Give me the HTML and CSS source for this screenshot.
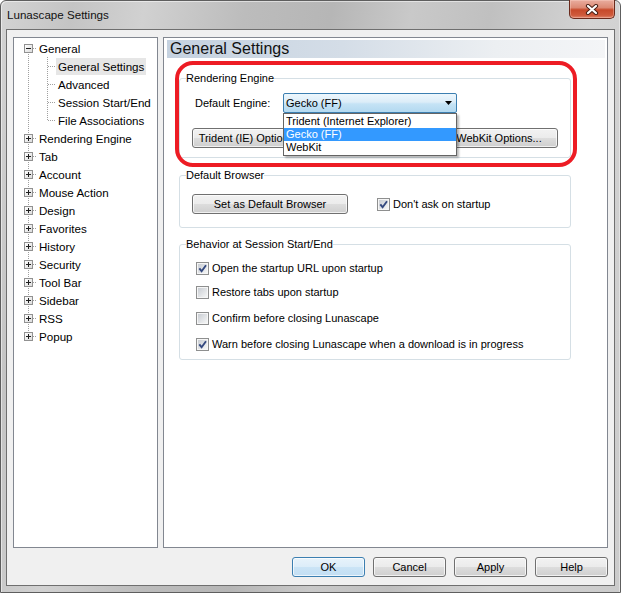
FILE: index.html
```html
<!DOCTYPE html>
<html lang="en">
<head>
    <meta charset="UTF-8">
    <title>Lunascape Settings</title>
    <link rel="stylesheet" href="styles.css">
</head>
<body>
<div class="window">
    <div class="titlebar">
        <span class="caption">Lunascape Settings</span>
        <button class="close" title="Close">
            <svg width="14" height="11" viewBox="0 0 14 11">
                <path d="M3 2 L11 9 M11 2 L3 9" stroke="#4a2016" stroke-width="4.2" stroke-linecap="round"/>
                <path d="M3 2 L11 9 M11 2 L3 9" stroke="#fff" stroke-width="2.2" stroke-linecap="round"/>
            </svg>
        </button>
    </div>

    <div class="client">
        <div class="main">
            <div class="tree-panel">
                <ul class="tree">
                    <li>
                        <div class="row"><span class="exp minus"></span><span class="dots"></span><span class="label">General</span></div>
                        <ul class="sub">
                            <li class="row"><span class="dots long"></span><span class="label selected">General Settings</span></li>
                            <li class="row"><span class="dots long"></span><span class="label">Advanced</span></li>
                            <li class="row"><span class="dots long"></span><span class="label">Session Start/End</span></li>
                            <li class="row"><span class="dots long"></span><span class="label">File Associations</span></li>
                        </ul>
                    </li>
                    <li class="row"><span class="exp"></span><span class="dots"></span><span class="label">Rendering Engine</span></li>
                    <li class="row"><span class="exp"></span><span class="dots"></span><span class="label">Tab</span></li>
                    <li class="row"><span class="exp"></span><span class="dots"></span><span class="label">Account</span></li>
                    <li class="row"><span class="exp"></span><span class="dots"></span><span class="label">Mouse Action</span></li>
                    <li class="row"><span class="exp"></span><span class="dots"></span><span class="label">Design</span></li>
                    <li class="row"><span class="exp"></span><span class="dots"></span><span class="label">Favorites</span></li>
                    <li class="row"><span class="exp"></span><span class="dots"></span><span class="label">History</span></li>
                    <li class="row"><span class="exp"></span><span class="dots"></span><span class="label">Security</span></li>
                    <li class="row"><span class="exp"></span><span class="dots"></span><span class="label">Tool Bar</span></li>
                    <li class="row"><span class="exp"></span><span class="dots"></span><span class="label">Sidebar</span></li>
                    <li class="row"><span class="exp"></span><span class="dots"></span><span class="label">RSS</span></li>
                    <li class="row"><span class="exp"></span><span class="dots"></span><span class="label">Popup</span></li>
                </ul>
            </div>

            <div class="page">
                <div class="page-title">General Settings</div>
                <div class="groups">
                    <fieldset class="group engine-group">
                        <legend>Rendering Engine</legend>
                        <div class="field-row">
                            <span class="field-label">Default Engine:</span>
                            <div class="combo">
                                <div class="combo-box">
                                    <span>Gecko (FF)</span>
                                    <svg width="7" height="4" viewBox="0 0 7 4"><path d="M0 0 H7 L3.5 4 Z" fill="#000"/></svg>
                                </div>
                                <ul class="combo-list">
                                    <li>Trident (Internet Explorer)</li>
                                    <li class="selected">Gecko (FF)</li>
                                    <li>WebKit</li>
                                </ul>
                            </div>
                        </div>
                        <div class="button-row">
                            <button class="btn engine-btn">Trident (IE) Options...</button>
                            <button class="btn engine-btn">Gecko (FF) Options...</button>
                            <button class="btn engine-btn">WebKit Options...</button>
                        </div>
                    </fieldset>

                    <fieldset class="group browser-group">
                        <legend>Default Browser</legend>
                        <div class="browser-row">
                            <button class="btn default-btn">Set as Default Browser</button>
                            <label class="check ask">
                                <span class="cb"><svg width="9" height="9" viewBox="0 0 9 9"><path d="M1.3 4.3 L3.6 7.2 L8 1.2" stroke="#34497f" stroke-width="1.9" fill="none"/></svg></span>
                                Don't ask on startup
                            </label>
                        </div>
                    </fieldset>

                    <fieldset class="group session-group">
                        <legend>Behavior at Session Start/End</legend>
                        <label class="check check-row">
                            <span class="cb"><svg width="9" height="9" viewBox="0 0 9 9"><path d="M1.3 4.3 L3.6 7.2 L8 1.2" stroke="#34497f" stroke-width="1.9" fill="none"/></svg></span>
                            Open the startup URL upon startup
                        </label>
                        <label class="check check-row">
                            <span class="cb"></span>
                            Restore tabs upon startup
                        </label>
                        <label class="check check-row wide">
                            <span class="cb"></span>
                            Confirm before closing Lunascape
                        </label>
                        <label class="check check-row wide">
                            <span class="cb"><svg width="9" height="9" viewBox="0 0 9 9"><path d="M1.3 4.3 L3.6 7.2 L8 1.2" stroke="#34497f" stroke-width="1.9" fill="none"/></svg></span>
                            Warn before closing Lunascape when a download is in progress
                        </label>
                    </fieldset>
                </div>

                <!-- red marker drawn over the screenshot -->
                <div class="annotation"></div>
            </div>
        </div>

        <div class="dialog-buttons">
            <button class="btn dlg default">OK</button>
            <button class="btn dlg">Cancel</button>
            <button class="btn dlg">Apply</button>
            <button class="btn dlg">Help</button>
        </div>
    </div>
</div>
</body>
</html>
```

FILE: styles.css
```css
html,
body {
    margin: 0;
    padding: 0;
}

body {
    font-family: "Liberation Sans", Arial, sans-serif;
    font-size: 11px;
    color: #000;
    background: #fff;
}

ul {
    list-style: none;
    margin: 0;
    padding: 0;
}

/* window frame */

.window {
    width: 621px;
    height: 593px;
    box-sizing: border-box;
    border: 1px solid #5e5e5e;
    border-radius: 6px 6px 0 0;
    padding: 0 5px 6px;
    display: flex;
    flex-direction: column;
    background: linear-gradient(100deg, #d3d3d3 0%, #c4c4c4 10%, #d1d1d1 20%, #bcbcbc 34%, #b6b6b6 46%, #c9c9c9 57%, #c0c0c0 68%, #d4d4d4 82%, #cbcbcb 100%);
    box-shadow: inset 1px 1px 0 rgba(255, 255, 255, .5), inset -1px 0 0 rgba(255, 255, 255, .4);
}

.titlebar {
    height: 28px;
    display: flex;
    justify-content: space-between;
    align-items: flex-start;
}

.caption {
    padding: 6px 0 0 1px;
    font-size: 11.6px;
    line-height: 16px;
    color: #111;
}

.close {
    width: 46px;
    height: 19px;
    margin: -1px 0 0 0;
    padding: 0;
    border: 1px solid #6a2a1c;
    border-top: 0;
    border-radius: 0 0 5px 5px;
    background: linear-gradient(#e9ad9f 0%, #dc8a75 42%, #c7492a 55%, #cf5a3b 85%, #e0876d 100%);
    box-shadow: inset 0 0 0 1px rgba(255, 220, 210, .35);
    display: flex;
    align-items: center;
    justify-content: center;
}

.close svg {
    display: block;
}

.client {
    flex: 1;
    border: 1px solid #6f6f6f;
    background: #f0f0f0;
    padding: 7px 6px 8px 6px;
    display: flex;
    flex-direction: column;
    min-height: 0;
}

.main {
    flex: 1;
    display: flex;
    gap: 5px;
    min-height: 0;
}

/* tree */

.tree-panel {
    width: 145px;
    box-sizing: border-box;
    border: 1px solid #828790;
    background: #fff;
    padding-top: 1px;
    font-size: 11.6px;
}

.tree {
    padding-left: 10px;
    background: repeating-linear-gradient(to bottom, #a0a0a0 0 1px, transparent 1px 2px) 14px 9px / 1px calc(100% - 18px) no-repeat;
}

.sub {
    margin-left: 23px;
    padding-left: 1px;
    background: repeating-linear-gradient(to bottom, #a0a0a0 0 1px, transparent 1px 2px) 0 0 / 1px calc(100% - 9px) no-repeat;
}

.row {
    height: 18px;
    display: flex;
    align-items: center;
    white-space: nowrap;
}

.exp {
    width: 9px;
    height: 9px;
    box-sizing: border-box;
    border: 1px solid #919191;
    flex: none;
    background:
        linear-gradient(#1f1f1f, #1f1f1f) center / 5px 1px no-repeat,
        linear-gradient(#1f1f1f, #1f1f1f) center / 1px 5px no-repeat,
        linear-gradient(135deg, #ffffff, #dcdcdc);
}

.exp.minus {
    background:
        linear-gradient(#1f1f1f, #1f1f1f) center / 5px 1px no-repeat,
        linear-gradient(135deg, #ffffff, #dcdcdc);
}

.dots {
    width: 4px;
    height: 1px;
    flex: none;
    background: repeating-linear-gradient(to right, #a0a0a0 0 1px, transparent 1px 2px);
}

.dots.long {
    width: 8px;
}

.label {
    height: 17px;
    line-height: 17px;
    padding: 0 2px;
}

.label.selected {
    background: #e6e6e6;
}

/* right page */

.page {
    flex: 1;
    position: relative;
    border: 1px solid #828790;
    background: #fff;
    padding: 2px 2px 0 3px;
}

.page-title {
    height: 18px;
    line-height: 18px;
    font-size: 16px;
    padding-left: 3px;
    color: #111;
    background: linear-gradient(to right, #c5d2e0 0%, #d4dde7 40%, #eceff2 75%, #f4f5f7 100%);
}

.groups {
    padding: 12px 34px 0 12px;
}

.group {
    margin: 0;
    padding: 0;
    border: 1px solid #d5dfe5;
    border-radius: 3px;
    min-inline-size: 0;
}

.group legend {
    margin-left: 6px;
    padding: 0;
    line-height: 16px;
}

.engine-group {
    padding-bottom: 9px;
}

.browser-group {
    margin-top: 9px;
    padding-bottom: 13px;
}

.session-group {
    margin-top: 8px;
    padding-bottom: 7px;
}

.field-row {
    display: flex;
    align-items: center;
    height: 20px;
    margin: 7px 0 0 15px;
}

.field-label {
    width: 88px;
}

.combo {
    position: relative;
}

.combo-box {
    width: 174px;
    height: 20px;
    box-sizing: border-box;
    border: 1px solid #3c7fb1;
    border-radius: 2px;
    padding: 0 4px 0 2px;
    display: flex;
    align-items: center;
    justify-content: space-between;
    background: linear-gradient(#edf7fd 0%, #dcedf8 45%, #c5e3f5 55%, #b3d9f0 100%);
}

.combo-box svg {
    display: block;
}

.combo-list {
    position: absolute;
    top: 100%;
    left: 0;
    width: 174px;
    box-sizing: border-box;
    border: 1px solid #646464;
    background: #fff;
    padding: 1px 0;
    box-shadow: 2px 2px 2px rgba(0, 0, 0, .28);
    z-index: 2;
}

.combo-list li {
    height: 13px;
    line-height: 13px;
    padding-left: 2px;
    white-space: nowrap;
}

.combo-list li.selected {
    background: #3399ff;
    color: #fff;
}

.button-row {
    display: flex;
    gap: 6px;
    margin: 15px 0 0 12px;
}

.btn {
    height: 20px;
    box-sizing: border-box;
    padding: 0;
    font-family: inherit;
    font-size: 11px;
    color: #000;
    border: 1px solid #707070;
    border-radius: 3px;
    background: linear-gradient(#f2f2f2 0%, #ebebeb 50%, #dddddd 50%, #cfcfcf 100%);
    box-shadow: inset 0 0 0 1px rgba(255, 255, 255, .7);
    white-space: nowrap;
}

.engine-btn {
    width: 118px;
}

.browser-row {
    display: flex;
    align-items: center;
    margin: 11px 0 0 12px;
}

.default-btn {
    width: 156px;
}

.check {
    display: flex;
    align-items: center;
    white-space: nowrap;
}

.ask {
    margin-left: 29px;
}

.cb {
    width: 13px;
    height: 13px;
    box-sizing: border-box;
    border: 1px solid #8e8f8f;
    padding: 1px;
    margin-right: 3px;
    flex: none;
    background: linear-gradient(135deg, #c9cdd3, #f5f6f6) content-box, #f6f6f6;
}

.cb svg {
    display: block;
}

.check-row {
    height: 16px;
    margin: 8px 0 0 16px;
}

.check-row.wide {
    margin-top: 10px;
}

.annotation {
    position: absolute;
    left: 11px;
    top: 23px;
    width: 402px;
    height: 106px;
    box-sizing: border-box;
    border: 4px solid #ed1c24;
    border-radius: 18px;
    z-index: 3;
    pointer-events: none;
}

/* dialog buttons */

.dialog-buttons {
    display: flex;
    justify-content: flex-end;
    gap: 8px;
    margin-top: 9px;
}

.dlg {
    width: 73px;
}

.dlg.default {
    border-color: #3c7fb1;
    background: linear-gradient(#e8f3fb 0%, #dcedf9 50%, #cbe4f6 50%, #c2def3 100%);
}
```
